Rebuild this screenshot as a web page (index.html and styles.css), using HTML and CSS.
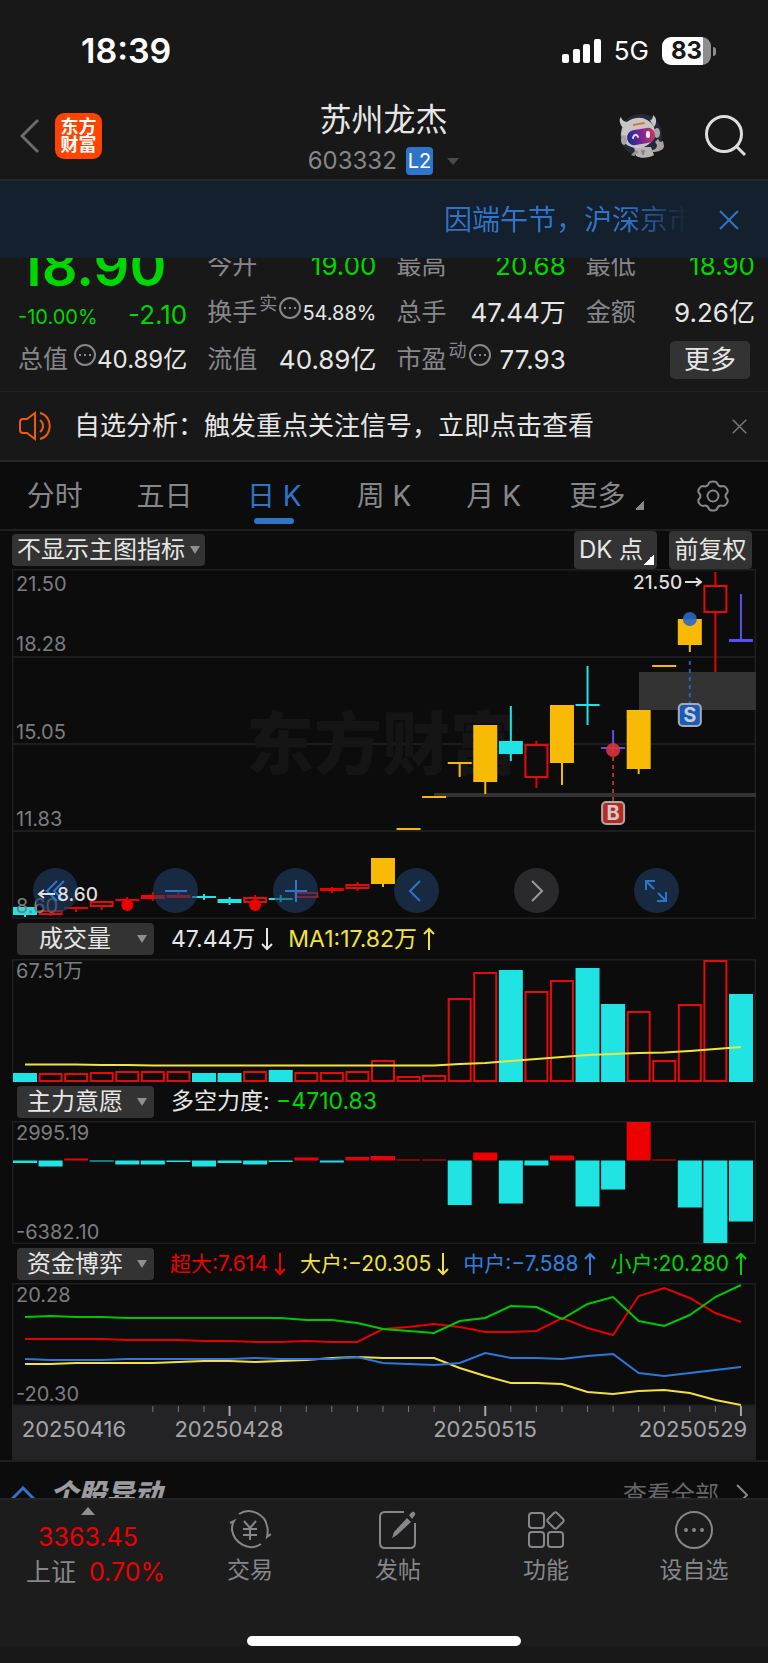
FILE: index.html
```
<!DOCTYPE html>
<html lang="zh-CN">
<head>
    <meta charset="UTF-8">
    <meta name="viewport" content="width=device-width, initial-scale=1.0">
    <title>苏州龙杰 603332</title>
    <link rel="stylesheet" href="styles.css">
</head>
<body>
    <svg class="defs" aria-hidden="true">
        <symbol id="arrow-down" viewBox="0 0 12 24"><path d="M6 1v21M1 17l5 5 5-5" /></symbol>
        <symbol id="arrow-up" viewBox="0 0 12 24"><path d="M6 23V2M1 7l5-5 5 5" /></symbol>
        <symbol id="dots" viewBox="0 0 22 22">
            <circle cx="11" cy="11" r="10" />
            <path d="M5 11h2M10 11h2M15 11h2" />
        </symbol>
        <symbol id="cross" viewBox="0 0 20 20"><path d="M1 1l18 18M19 1L1 19" /></symbol>
    </svg>

    <div class="status-bar">
        <span class="clock">18:39</span>
        <div class="status-right">
            <svg class="signal" viewBox="0 0 39 24">
                <rect x="0" y="15" width="7" height="9" rx="2" />
                <rect x="11" y="10" width="7" height="14" rx="2" />
                <rect x="21" y="5" width="7" height="19" rx="2" />
                <rect x="32" y="0" width="7" height="24" rx="2" />
            </svg>
            <span class="network">5G</span>
            <span class="battery">83</span>
        </div>
    </div>

    <header class="header">
        <div class="header-side">
            <button class="icon-btn" aria-label="返回">
                <svg class="back" viewBox="0 0 20 36"><path d="M18 2L2 18l16 16" /></svg>
            </button>
            <a href="#" class="logo">东方<br>财富</a>
        </div>
        <div class="header-title">
            <h1>苏州龙杰</h1>
            <div class="code"><span>603332</span><span class="level">L2</span><i class="caret"></i></div>
        </div>
        <div class="header-side header-right">
            <button class="icon-btn" aria-label="助手">
                <svg class="robot" viewBox="0 0 46 46">
                    <circle cx="22" cy="22" r="21" fill="#232b3a" />
                    <path d="M4 15C0 10 0 6 2 4c1 4 4 5 8 5zM31 7c2 0 3-2 3-5 4 3 4 8 1 12z" fill="#c9c6c6" />
                    <path d="M15 34h17l3 8c-5 3-13 4-18 1z" fill="#b9b4b4" />
                    <path d="M17 37l-5 5 3 1 5-4z" fill="#9a9494" />
                    <path d="M32 37c4 0 6-2 6-5l-2-3 3-3 2 3 3-1 1 5c0 4-6 6-12 6z" fill="#a7a1a2" />
                    <ellipse cx="19" cy="20" rx="17" ry="15" fill="#c9c5c5" transform="rotate(-12 19 20)" />
                    <ellipse cx="5" cy="27" rx="3" ry="5" fill="#aaa4a7" />
                    <ellipse cx="38" cy="20" rx="3" ry="5" fill="#aaa4a7" />
                    <path d="M14 11l11-2 1 2-12 2z" fill="#c87a3c" />
                    <rect x="8" y="16" width="28" height="15" rx="7" fill="url(#visor)" transform="rotate(-10 22 23)" />
                    <path d="M14 25c1-4 4-4 5-1" fill="none" stroke="#ddd" stroke-width="2" stroke-linecap="round" />
                    <rect x="27" y="18" width="4" height="7" rx="2" fill="#eee" />
                    <path d="M22 37l4 0-1 5-2 0z" fill="#8a8386" />
                    <defs>
                        <linearGradient id="visor">
                            <stop offset="0" stop-color="#1c2a92" />
                            <stop offset="0.500" stop-color="#7b2593" />
                            <stop offset="1" stop-color="#c83660" />
                        </linearGradient>
                    </defs>
                </svg>
            </button>
            <button class="icon-btn" aria-label="搜索">
                <svg class="search" viewBox="0 0 42 42"><circle cx="19" cy="19" r="17.500" /><path d="M31 31l9 9" /></svg>
            </button>
        </div>
    </header>

    <div class="banner">
        <p>因端午节，沪深京市</p>
        <button class="icon-btn" aria-label="关闭公告"><svg class="banner-close"><use href="#cross" /></svg></button>
    </div>

    <section class="quote">
        <div class="quote-grid">
            <div class="cell price">18.90</div>
            <div class="cell"><span class="label">今开</span><span class="down">19.00</span></div>
            <div class="cell"><span class="label">最高</span><span class="down">20.68</span></div>
            <div class="cell"><span class="label">最低</span><span class="down">18.90</span></div>

            <div class="cell change down"><span class="small">-10.00%</span><span>-2.10</span></div>
            <div class="cell"><span class="label">换手<sup>实</sup><svg class="dots"><use href="#dots" /></svg></span><span class="small">54.88%</span></div>
            <div class="cell"><span class="label">总手</span><span>47.44万</span></div>
            <div class="cell"><span class="label">金额</span><span>9.26亿</span></div>

            <div class="cell"><span class="label">总值<svg class="dots dots-gap"><use href="#dots" /></svg></span><span class="tight">40.89亿</span></div>
            <div class="cell"><span class="label">流值</span><span>40.89亿</span></div>
            <div class="cell"><span class="label">市盈<sup>动</sup><svg class="dots"><use href="#dots" /></svg></span><span>77.93</span></div>
            <div class="cell cell-more"><button class="more">更多</button></div>
        </div>
    </section>

    <div class="notice">
        <svg class="speaker" viewBox="0 0 34 30">
            <path d="M16 2v26l-8-6H4c-2 0-3-1-3-3v-8c0-2 1-3 3-3h4zM21 9c4 3 4 9 0 12M21 2c13 3 13 23 0 26" />
        </svg>
        <p>自选分析：触发重点关注信号，立即点击查看</p>
        <button class="icon-btn" aria-label="关闭提示"><svg class="notice-close"><use href="#cross" /></svg></button>
    </div>

    <nav class="tabs">
        <button>分时</button>
        <button>五日</button>
        <button class="active">日 K</button>
        <button>周 K</button>
        <button>月 K</button>
        <button>更多<i class="corner"></i></button>
        <button aria-label="设置">
            <svg class="gear" viewBox="0 0 32 32">
                <path d="M12 3c1-2 7-2 8 0 1 3 3 4 6 3 3 0 6 5 4 7-2 2-2 4 0 6 2 2-1 7-4 7-3-1-5 0-6 3-1 2-7 2-8 0-1-3-3-4-6-3-3 0-6-5-4-7 2-2 2-4 0-6-2-2 1-7 4-7 3 1 5 0 6-3z" />
                <circle cx="16" cy="16" r="5.500" />
            </svg>
        </button>
    </nav>

    <main class="charts">
        <div class="toolbar">
            <button class="chip chip-main">不显示主图指标<i class="caret"></i></button>
            <div class="toolbar-right">
                <button class="chip chip-tall">DK 点<i class="corner"></i></button>
                <button class="chip chip-tall">前复权</button>
            </div>
        </div>

        <div class="kline">
            <svg id="kline" class="chart" viewBox="0 0 744 350"></svg>
            <div class="controls">
                <button aria-label="最左"><svg viewBox="0 0 24 24"><path d="M13 2L3 12l10 10M20 2L10 12l10 10" /></svg></button>
                <button aria-label="缩小"><svg viewBox="0 0 24 24"><path d="M1 12h22" /></svg></button>
                <button aria-label="放大"><svg viewBox="0 0 24 24"><path d="M1 12h22M12 1v22" /></svg></button>
                <button aria-label="左移"><svg viewBox="0 0 24 24"><path d="M16 2L6 12l10 10" /></svg></button>
                <button aria-label="右移" class="disabled"><svg viewBox="0 0 24 24"><path d="M8 2l10 10L8 22" /></svg></button>
                <button aria-label="全屏"><svg viewBox="0 0 24 24"><path d="M2 11V2h9M2 2l8 8M22 13v9h-9M22 22l-8-8" /></svg></button>
            </div>
        </div>

        <div class="indicator">
            <button class="chip chip-select">成交量<i class="caret"></i></button>
            <span>47.44万<svg class="arrow"><use href="#arrow-down" /></svg></span>
            <span class="yellow">MA1:17.82万<svg class="arrow"><use href="#arrow-up" /></svg></span>
        </div>
        <svg id="volume" class="chart" viewBox="0 0 744 123"></svg>

        <div class="indicator">
            <button class="chip chip-select">主力意愿<i class="caret"></i></button>
            <span>多空力度: <b class="down">−4710.83</b></span>
        </div>
        <svg id="force" class="chart" viewBox="0 0 744 123"></svg>

        <div class="indicator indicator-funds">
            <button class="chip chip-select">资金博弈<i class="caret"></i></button>
            <span class="up">超大:7.614<svg class="arrow"><use href="#arrow-down" /></svg></span>
            <span class="yellow">大户:−20.305<svg class="arrow"><use href="#arrow-down" /></svg></span>
            <span class="blue">中户:−7.588<svg class="arrow"><use href="#arrow-up" /></svg></span>
            <span class="down">小户:20.280<svg class="arrow"><use href="#arrow-up" /></svg></span>
        </div>
        <svg id="funds" class="chart" viewBox="0 0 744 123"></svg>
        <svg id="axis" class="axis" viewBox="0 0 744 54"></svg>
    </main>

    <section class="events">
        <svg class="events-mark" viewBox="0 0 24 24"><path d="M1 13L12 2l11 11" /></svg>
        <h2>个股异动</h2>
        <a href="#">查看全部<svg viewBox="0 0 12 24"><path d="M1 2l10 10L1 22" /></svg></a>
    </section>

    <footer class="bottom">
        <nav class="bottom-nav">
            <a href="#" class="index">
                <i class="triangle"></i>
                <span class="up">3363.45</span>
                <span class="index-name">上证<b class="up">0.70%</b></span>
            </a>
            <a href="#">
                <svg viewBox="0 0 42 42">
                    <path d="M10 5C21-2 36 5 38 17c1 3 1 6 0 11l4-3M32 35C20 43 5 34 3 21c0-4 0-6 2-9l-4 2" />
                    <path d="M15 12l6 7 6-7M21 19v12M14 20h14M14 26h14" />
                </svg>
                <span>交易</span>
            </a>
            <a href="#">
                <svg viewBox="0 0 42 42">
                    <path d="M27 3H8C5 3 3 5 3 8v26c0 3 2 5 5 5h25c3 0 5-2 5-5V14" />
                    <path class="solid" d="M30 9l4 4-14 13-5 3 2-6zM32 6l3-3c2-1 4 1 3 3l-3 4z" />
                </svg>
                <span>发帖</span>
            </a>
            <a href="#">
                <svg viewBox="0 0 42 42">
                    <rect x="4" y="4" width="15" height="15" rx="3" />
                    <rect x="4" y="23" width="15" height="15" rx="3" />
                    <rect x="23" y="23" width="15" height="15" rx="3" />
                    <path d="M29 4c1-1 2-1 3 0l6 6c1 1 1 2 0 3l-6 6c-1 1-2 1-3 0l-6-6c-1-1-1-2 0-3z" />
                </svg>
                <span>功能</span>
            </a>
            <a href="#">
                <svg viewBox="0 0 42 42">
                    <circle cx="21" cy="21" r="18" />
                    <path class="dot-row" d="M13 21h0M21 21h0M29 21h0" />
                </svg>
                <span>设自选</span>
            </a>
        </nav>
        <div class="home-indicator"></div>
    </footer>

    <script src="charts.js"></script>
</body>
</html>
```
FILE: charts.js
```
const STEP = 25.57;
const BAR = 24;
const centre = i => 13 + i * STEP;

// type, body top, body bottom, high, low
const candles = [
    ['cyan', 338, 346, 338, 348], ['red', 341, 346, 341, 347], ['red', 338, 340, 338, 343],
    ['red', 332, 338, 332, 341], ['red', 330, 332, 328, 332], ['red', 326, 330, 323, 332],
    ['red', 326, 329, 322, 329], ['cyan', 327, 329, 325, 331], ['cyan', 330, 334, 328, 336],
    ['red', 328, 334, 326, 334], ['cyan', 329, 331, 326, 333], ['red', 323, 329, 323, 329],
    ['red', 319, 322, 318, 324], ['red', 315, 320, 313, 322], ['gold', 289, 315, 289, 318],
    ['gold', 259, 261, 259, 261], ['gold', 227, 229, 227, 229], ['gold', 193, 195, 193, 208],
    ['gold', 156, 213, 156, 225], ['cyan', 172, 185, 137, 192], ['red', 175, 209, 172, 219],
    ['gold', 136, 194, 136, 216], ['cyan', 135, 137, 97, 156], ['violet', 178, 180, 161, 184],
    ['gold', 141, 200, 141, 205], ['gold', 96, 98, 96, 98], ['gold', 50, 76, 50, 83],
    ['red', 16, 44, 3, 103], ['violet', 70, 73, 25, 73]
];

const volumeTops = [114, 114, 114, 113, 112, 112, 112, 114, 114, 112, 111, 113, 113, 112, 101,
    117, 116, 39, 13, 11, 32, 21, 9, 45, 52, 101, 45, 1, 35];
const volumeDown = [0, 7, 8, 10, 19, 22, 23, 28];
const ma = [105.5, 105.5, 105.5, 106, 106, 106.5, 106.5, 106.5, 106.5, 106.5, 106.5, 106.5, 106.5,
    106.5, 106.5, 106.5, 106.5, 105, 104, 102, 100, 98, 96, 95, 94, 93.5, 92, 90, 88];

const force = [-2.5, -6, 2, -1, -4, -4, -1.5, -6, -2.5, -4, -1.5, 3, -2, 3.5, 4.5, 1, 1,
    -44.5, 8, -43, -5, 5, -46, -29, 38.5, 1, -47, -82.5, -61];

const funds = {
    red: [56, 56, 56, 56, 57, 57, 57, 58, 58, 59, 59, 58, 59, 59, 46, 44, 41, 44, 49, 49, 48, 35, 45, 52, 13, 5, 15, 30, 39],
    yellow: [81, 81, 80, 80, 80, 80, 79, 78, 78, 79, 78, 77, 75, 74, 75, 75, 75, 85, 93, 100, 100, 101, 109, 111, 108, 107, 110, 117, 122],
    blue: [76, 77, 77, 77, 76, 76, 76, 76, 76, 75, 76, 76, 76, 74, 80, 81, 82, 80, 70, 75, 75, 76, 73, 71, 90, 93, 90, 87, 84],
    green: [34, 33, 34, 34, 35, 35, 35, 35, 35, 35, 35, 37, 37, 40, 46, 48, 50, 38, 35, 23, 24, 36, 21, 14, 38, 43, 32, 14, 2]
};

const frame = height => `<rect class="frame" x="0.5" y="0.5" width="743" height="${height - 1}" />`;
const label = (text, y) => `<text class="tick-label" x="4" y="${y}">${text}</text>`;
const points = values => values.map((y, i) => `${centre(i)},${y}`).join(' ');

// Hollow bars are inset so the stroke stays inside the bar
function bar(type, i, top, bottom) {
    const x = centre(i) - BAR / 2;
    const h = bottom - top;
    if (type === 'red' && h > 3) {
        return `<rect class="hollow" x="${x + 1}" y="${top + 1}" width="${BAR - 2}" height="${h - 2}" />`;
    }
    return `<rect class="fill-${type}" x="${x}" y="${top}" width="${BAR}" height="${h}" />`;
}

function drawKline() {
    let out = frame(350);
    [88, 175, 262].forEach(y => out += `<line class="grid" x1="0" x2="744" y1="${y}" y2="${y}" />`);
    out += '<text class="watermark" x="234" y="200">东方财富</text>';
    out += '<rect class="zone" x="627" y="103" width="117" height="38" />';
    out += '<rect class="zone" x="422" y="224" width="322" height="4" />';
    candles.forEach(([type, top, bottom, high, low], i) => {
        const x = centre(i);
        if (high < top) out += `<line class="wick line-${type}" x1="${x}" x2="${x}" y1="${high}" y2="${top}" />`;
        if (low > bottom) out += `<line class="wick line-${type}" x1="${x}" x2="${x}" y1="${bottom}" y2="${low}" />`;
        out += bar(type, i, top, bottom);
    });
    [4, 9].forEach(i => out += `<circle class="fill-red" cx="${centre(i)}" cy="336" r="6" />`);
    out += marker(23, 'buy', 'B', 181, 188, 232);
    out += marker(26, 'sell', 'S', 50, 92, 134);
    out += label('21.50', 22) + label('18.28', 82) + label('15.05', 170) + label('11.83', 257) + label('8.60', 344);
    out += '<text class="price-label" x="621" y="20">21.50</text><path class="price-arrow" d="M673 13h16M684 9l5 4-5 4" />';
    document.getElementById('kline').innerHTML = out;
}

// The low price stays readable above the round buttons
function drawLowPrice() {
    document.querySelector('.controls').insertAdjacentHTML('afterend',
        '<svg class="chart low-price" viewBox="0 0 744 350"><text class="price-label" x="45" y="332">8.60</text>' +
        '<path class="price-arrow" d="M43 325H27M32 321l-5 4 5 4" /></svg>');
}

function marker(i, type, text, dot, from, to) {
    const x = centre(i);
    return `<circle class="dot-${type}" cx="${x}" cy="${dot}" r="7" />
        <line class="dash-${type}" x1="${x}" x2="${x}" y1="${from}" y2="${to}" />
        <rect class="badge-${type}" x="${x - 11}" y="${to + 1}" width="22" height="22" rx="4" />
        <text class="badge-text" x="${x}" y="${to + 19}">${text}</text>`;
}

function drawVolume() {
    let out = frame(123);
    volumeTops.forEach((top, i) => out += bar(volumeDown.includes(i) ? 'cyan' : 'red', i, top, 123));
    out += `<polyline class="line-yellow" points="${points(ma)}" />` + label('67.51万', 19);
    document.getElementById('volume').innerHTML = out;
}

function drawForce() {
    let out = frame(123);
    force.forEach((v, i) => {
        const x = centre(i) - BAR / 2;
        const y = v > 0 ? 39.5 - v : 39.5;
        out += `<rect class="fill-${v > 0 ? 'red' : 'cyan'}" x="${x}" y="${y}" width="${BAR}" height="${Math.abs(v)}" />`;
    });
    out += label('2995.19', 19) + label('-6382.10', 118);
    document.getElementById('force').innerHTML = out;
}

function drawFunds() {
    let out = frame(123);
    Object.keys(funds).forEach(name => out += `<polyline class="line-${name}" points="${points(funds[name])}" />`);
    out += label('20.28', 19) + label('-20.30', 118);
    document.getElementById('funds').innerHTML = out;
}

function drawAxis() {
    let out = '';
    for (let i = 5; i < 29; i++) {
        const major = i % 10 === 8;
        out += `<line class="${major ? 'tick major' : 'tick'}" x1="${centre(i)}" x2="${centre(i)}" y1="0" y2="${major ? 10 : 6}" />`;
    }
    [['20250416', 62], ['20250428', 217], ['20250515', 473], ['20250529', 681]].forEach(([date, x]) => {
        out += `<text class="date" x="${x}" y="31">${date}</text>`;
    });
    document.getElementById('axis').innerHTML = out;
}

drawKline();
drawLowPrice();
drawVolume();
drawForce();
drawFunds();
drawAxis();
```
FILE: styles.css
```
:root {
    --bg: #181818;
    --chart-bg: #0c0c0c;
    --line: #232323;
    --text: #e6e6e6;
    --muted: #86868b;
    --chip: #333;
    --blue: #2f74c8;
    --red: #ee0000;
    --green: #00d600;
    --yellow: #f2e33c;
    --cyan: #20e3e3;
    --gold: #f8ba04;
    --violet: #5a50f0;
}

* {
    box-sizing: border-box;
}

body {
    margin: 0;
    background: var(--bg);
    color: var(--text);
    font-family: Inter, "Noto Sans CJK SC", sans-serif;
    font-size: 26px;
    line-height: 1;
    white-space: nowrap;
}

h1, h2, p {
    margin: 0;
    font-weight: 400;
}

b {
    font-weight: 400;
}

a {
    color: inherit;
    text-decoration: none;
}

button {
    padding: 0;
    border: 0;
    background: none;
    color: inherit;
    font: inherit;
    cursor: pointer;
}

svg {
    display: block;
    fill: none;
    stroke: currentColor;
    stroke-width: 2;
}

.defs {
    display: none;
}

.icon-btn {
    display: flex;
}

.up { color: var(--red); }
.down { color: var(--green); }
.yellow { color: var(--yellow); }
.blue { color: #3080e0; }

.caret {
    border: 5px solid transparent;
    border-top: 8px solid #8e8e93;
    border-bottom: 0;
}

.corner {
    width: 9px;
    height: 9px;
    background: linear-gradient(135deg, transparent 50%, currentColor 50%);
}

/* Status bar */
.status-bar {
    display: flex;
    justify-content: space-between;
    align-items: center;
    height: 102px;
    padding: 0 52px 0 81px;
    color: #fff;
}

.clock {
    font-size: 34px;
    font-weight: 600;
}

.status-right {
    display: flex;
    align-items: center;
    gap: 13px;
}

.signal {
    width: 39px;
    height: 24px;
    fill: #fff;
    stroke: none;
}

.network {
    font-size: 26px;
}

.battery {
    position: relative;
    width: 49px;
    margin-right: 5px;
    border-radius: 9px;
    background: linear-gradient(90deg, #fff 83%, #8e8e8e 83%);
    color: #181818;
    font-size: 24px;
    font-weight: 700;
    line-height: 28px;
    text-align: center;
}

.battery::after {
    content: "";
    position: absolute;
    top: 10px;
    right: -5px;
    width: 3px;
    height: 9px;
    border-radius: 0 3px 3px 0;
    background: #8e8e8e;
}

/* Header */
.header {
    display: grid;
    grid-template-columns: 1fr auto 1fr;
    height: 79px;
    padding: 0 21px 0 20px;
    border-bottom: 2px solid #282828;
}

.header-side {
    display: flex;
    align-items: center;
    gap: 15px;
    height: 68px;
}

.header-right {
    justify-content: flex-end;
    gap: 40px;
}

.back {
    width: 20px;
    height: 36px;
    color: #6c6c6c;
    stroke-width: 3;
}

.logo {
    width: 47px;
    padding: 5px 0;
    border-radius: 9px;
    background: #ff4400;
    color: #fff;
    font-size: 18px;
    font-weight: 700;
    line-height: 18px;
    text-align: center;
}

.header-title {
    display: flex;
    flex-direction: column;
    align-items: center;
}

.header-title h1 {
    font-size: 32px;
    line-height: 35px;
}

.code {
    display: flex;
    align-items: center;
    gap: 9px;
    margin-top: 10px;
    color: var(--muted);
    font-size: 24px;
}

.code .caret {
    margin-left: 5px;
    border-width: 7px 6px 0;
    border-top-color: #4a4a4a;
}

.level {
    padding: 0 2px;
    border-radius: 4px;
    background: var(--blue);
    color: #fff;
    font-size: 20px;
    line-height: 28px;
}

.robot {
    width: 46px;
    height: 46px;
    stroke: none;
}

.search {
    width: 42px;
    height: 42px;
    color: #ddd;
    stroke-width: 3;
}

/* Holiday banner */
.banner {
    display: flex;
    justify-content: flex-end;
    align-items: center;
    gap: 31px;
    height: 77px;
    padding-right: 29px;
    background: #15202f;
    color: var(--blue);
}

.banner p {
    width: 244px;
    overflow: hidden;
    font-size: 28px;
    line-height: 40px;
    mask-image: linear-gradient(90deg, #000 75%, transparent);
}

.banner-close {
    width: 20px;
    height: 20px;
}

/* Quote */
.quote {
    overflow: hidden;
    padding-bottom: 8px;
    border-bottom: 1px solid var(--line);
}

.quote-grid {
    display: grid;
    grid-template-columns: repeat(4, 1fr);
    grid-auto-rows: 47px;
    column-gap: 20px;
    margin-top: -16px;
    padding: 0 13px 0 18px;
}

.cell {
    display: flex;
    justify-content: space-between;
    align-items: center;
    min-width: 0;
}

.cell .small {
    font-size: 20px;
}

.cell .tight {
    font-size: 24px;
}

.change {
    align-items: baseline;
    padding-top: 13px;
}

.label {
    display: flex;
    align-items: center;
    color: var(--muted);
    font-size: 25px;
}

.label sup {
    align-self: flex-start;
    margin-left: 2px;
    font-size: 18px;
    line-height: 14px;
    vertical-align: baseline;
}

.dots {
    width: 22px;
    height: 22px;
    margin: 0 0 10px 2px;
}

.dots-gap {
    margin-left: 6px;
}

.price {
    color: var(--green);
    font-size: 56px;
    font-weight: 600;
}

.cell-more {
    justify-content: flex-end;
    padding-right: 5px;
}

.more {
    padding: 0 14px;
    border-radius: 5px;
    background: var(--chip);
    line-height: 38px;
}

/* Notice */
.notice {
    display: flex;
    align-items: center;
    height: 70px;
    padding: 0 21px 0 19px;
    border-bottom: 2px solid #282828;
}

.notice p {
    flex: 1;
    margin-left: 21px;
}

.speaker {
    width: 34px;
    height: 30px;
    color: #ee5a10;
}

.notice-close {
    width: 15px;
    height: 15px;
    color: #777;
}

/* Period tabs */
.tabs {
    display: grid;
    grid-template-columns: repeat(7, 1fr);
    height: 69px;
    border-bottom: 2px solid #1f1f1f;
    background: var(--chart-bg);
    color: var(--muted);
    font-size: 28px;
}

.tabs button {
    position: relative;
    display: flex;
    justify-content: center;
    align-items: center;
}

.tabs .active {
    color: var(--blue);
}

.tabs .active::after {
    content: "";
    position: absolute;
    bottom: 5px;
    width: 40px;
    height: 6px;
    border-radius: 3px;
    background: var(--blue);
}

.tabs .corner {
    align-self: flex-end;
    margin: 0 -7px 19px 10px;
}

.gear {
    width: 32px;
    height: 32px;
    stroke-linejoin: round;
}

/* Charts */
.charts {
    padding: 0 12px;
    border-bottom: 2px solid #1f1f1f;
    background: var(--chart-bg);
}

.toolbar {
    display: flex;
    justify-content: space-between;
    align-items: center;
    padding-right: 4px;
}

.toolbar-right {
    display: flex;
    gap: 12px;
}

.chip {
    display: flex;
    justify-content: center;
    align-items: center;
    height: 32px;
    border-radius: 4px;
    background: var(--chip);
    font-size: 24px;
}

.chip-main {
    gap: 5px;
    width: 193px;
}

.chip-tall {
    width: 83px;
    height: 38px;
}

.chip-tall .corner {
    align-self: flex-end;
    width: 11px;
    height: 11px;
    margin: 0 -2px 4px 0;
    color: #fff;
}

/* Name centred, caret held at the right edge */
.chip-select {
    display: grid;
    grid-template-columns: 1fr 21px;
    width: 137px;
    justify-items: center;
}

.chip-select .caret {
    margin-right: 4px;
}

.indicator {
    display: flex;
    align-items: center;
    gap: 15px;
    height: 39px;
    padding-left: 5px;
    font-size: 23px;
}

.kline + .indicator {
    height: 40px;
}

.indicator .chip {
    margin-right: 2px;
}

.indicator span {
    display: flex;
    align-items: center;
    white-space: pre;
}

.indicator-funds {
    gap: 14px;
    font-size: 21px;
}

.arrow {
    width: 12px;
    height: 24px;
    margin-left: 6px;
}

.kline {
    position: relative;
}

.chart, .axis {
    width: 100%;
    height: auto;
    stroke: none;
}

.axis {
    background: #232325;
}

/* Buttons float over the candles */
.controls {
    position: absolute;
    left: 0;
    right: 0;
    bottom: 6px;
    display: flex;
    justify-content: space-between;
    padding: 0 77px 0 21px;
}

.controls button {
    display: grid;
    place-items: center;
    width: 45px;
    height: 45px;
    border-radius: 50%;
    background: rgba(31, 63, 103, 0.6);
    color: var(--blue);
}

.controls .disabled {
    background: #2a2a2c;
    color: #98989d;
}

.controls svg {
    width: 24px;
    height: 24px;
}

.low-price {
    position: absolute;
    inset: 0;
    pointer-events: none;
}

.frame { fill: none; stroke: #1f1f1f; }
.grid { stroke: #1d1d1d; stroke-width: 2; }
.zone { fill: #333; }
.watermark { fill: #151515; font-size: 68px; font-weight: 900; }
.tick-label { fill: #7c7c81; font-size: 20px; }
.date { fill: #a6a6aa; font-size: 22px; text-anchor: middle; }
.tick { stroke: #77777c; stroke-width: 1; }
.major { stroke: #a6a6aa; stroke-width: 2; }
.price-label { fill: #ddd; font-size: 19px; font-weight: 500; }
.price-arrow { fill: none; stroke: #ddd; stroke-width: 2; }

.hollow { fill: none; stroke: #e60a0a; stroke-width: 2; }
.wick { stroke-width: 2; }
.fill-red { fill: var(--red); }
.fill-cyan { fill: var(--cyan); }
.fill-gold { fill: var(--gold); }
.fill-violet { fill: var(--violet); }
.line-red, .line-cyan, .line-gold, .line-violet,
.line-yellow, .line-blue, .line-green { fill: none; stroke-width: 2; }
.line-red { stroke: #e60000; }
.line-cyan { stroke: var(--cyan); }
.line-gold { stroke: var(--gold); }
.line-violet { stroke: var(--violet); }
.line-yellow { stroke: var(--yellow); }
.line-blue { stroke: #2b78dc; }
.line-green { stroke: #00c800; }

.dot-buy { fill: #d8343a; fill-opacity: 0.9; }
.dot-sell { fill: #2868c8; fill-opacity: 0.9; }
.dash-buy, .dash-sell { stroke-width: 2; stroke-dasharray: 4 4; }
.dash-buy { stroke: #c03024; }
.dash-sell { stroke: #1f63c4; }
.badge-buy, .badge-sell { stroke: #aaa; stroke-width: 2; }
.badge-buy { fill: #b92a1c; }
.badge-sell { fill: #165bbd; }
.badge-text { fill: #ccc; font-size: 20px; font-weight: 700; text-anchor: middle; }

/* Events row, cut off by the bottom bar */
.events {
    display: flex;
    align-items: flex-start;
    height: 36px;
    padding: 18px 20px 0 11px;
    overflow: hidden;
    background: var(--chart-bg);
}

.events-mark {
    width: 24px;
    height: 24px;
    margin-top: 6px;
    color: var(--blue);
    stroke-width: 3;
}

.events h2 {
    flex: 1;
    margin-left: 15px;
    color: #9a9a9f;
    font-size: 28px;
    font-style: italic;
    font-weight: 900;
}

.events a {
    display: flex;
    gap: 17px;
    margin-top: 3px;
    color: #66666a;
    font-size: 24px;
}

.events a svg {
    width: 12px;
    height: 24px;
    color: #86868b;
}

/* Bottom bar */
.bottom {
    border-top: 2px solid #242424;
    background: #1c1c1c;
}

.bottom-nav {
    display: grid;
    grid-template-columns: 176fr repeat(4, 148fr);
    height: 136px;
    color: var(--muted);
    font-size: 23px;
}

.bottom-nav a {
    display: flex;
    flex-direction: column;
    align-items: center;
    gap: 8px;
    padding-top: 9px;
}

.bottom-nav svg {
    width: 42px;
    height: 42px;
}

.bottom-nav .solid {
    fill: currentColor;
    stroke: none;
}

.bottom-nav .dot-row {
    stroke-width: 4;
    stroke-linecap: round;
}

.bottom-nav .index {
    gap: 10px;
    padding-top: 7px;
    font-size: 25px;
}

.triangle {
    border: 7px solid transparent;
    border-top: 0;
    border-bottom: 8px solid #8e8e93;
}

.index-name {
    display: flex;
    align-items: center;
    gap: 13px;
    padding-left: 15px;
}

.home-indicator {
    width: 274px;
    height: 10px;
    margin: 0 auto 17px;
    border-radius: 5px;
    background: #fff;
}
```
